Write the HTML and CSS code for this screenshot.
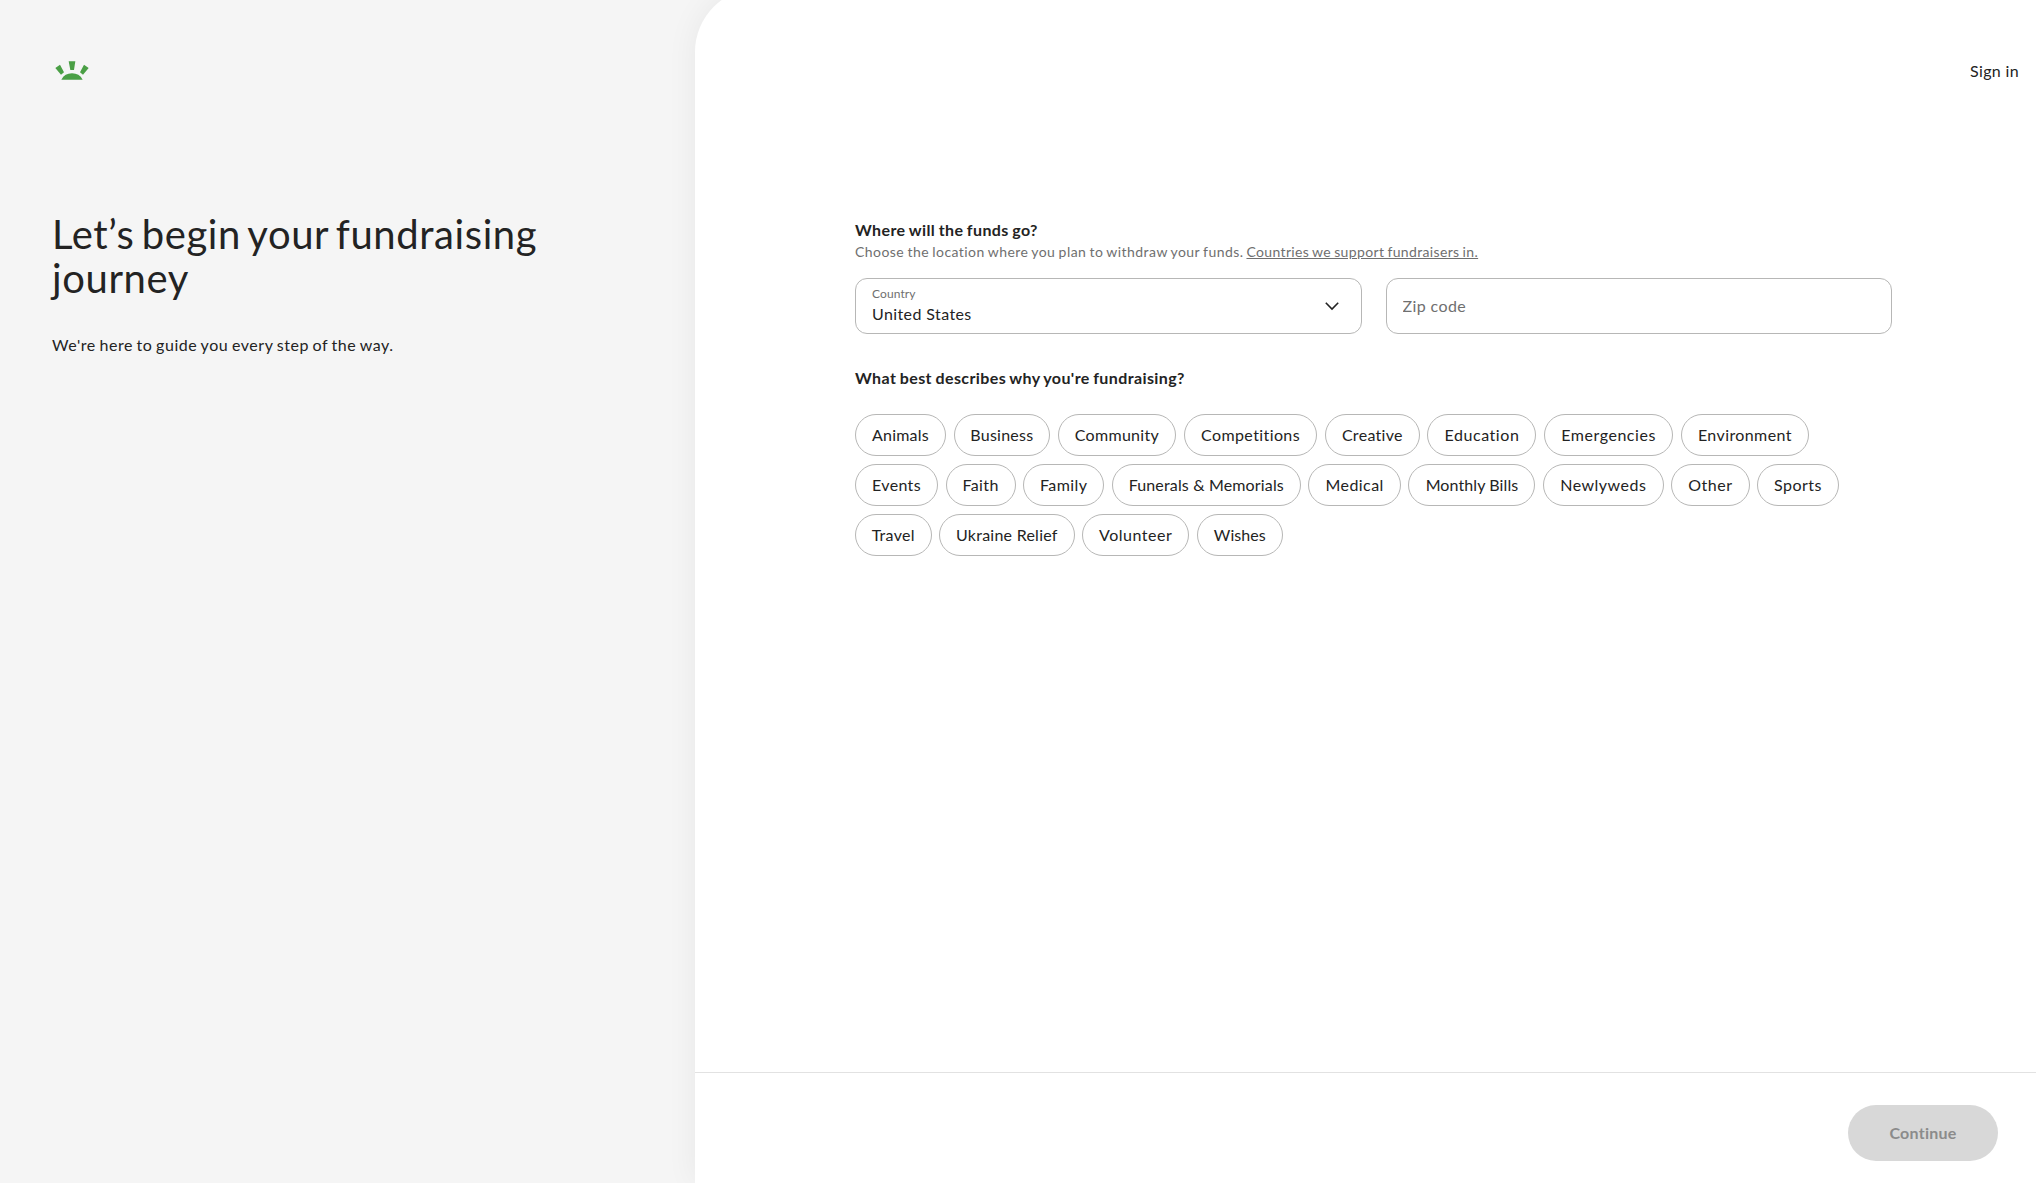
FILE: index.html
```html
<!DOCTYPE html>
<html lang="en">
  <head>
    <meta charset="UTF-8" />
    <meta name="viewport" content="width=device-width, initial-scale=1.0" />
    <title>Start a fundraiser</title>
    <link rel="stylesheet" href="styles.css">
  </head>
  <body>
    <aside class="intro">
      <a class="logo" href="#" aria-label="Home">
        <svg width="34" height="19" viewBox="0 0 102 57">
          <path d="M41 1h20l-4 26H46zM1 21l14-10 12 23-9 7zM101 21L87 11 75 34l9 7zM19 56q10-19 32-19t32 19z" />
        </svg>
      </a>
      <h1>Let’s begin your fundraising journey</h1>
      <p>We're here to guide you every step of the way.</p>
    </aside>

    <main class="panel">
      <header>
        <a class="sign-in" href="#">Sign in</a>
      </header>

      <form class="details">
        <h2>Where will the funds go?</h2>
        <p class="hint">
          <span>Choose the location where you plan to withdraw your funds.</span>
          <a href="#">Countries we support fundraisers in.</a>
        </p>

        <div class="fields">
          <div class="field country">
            <div>
              <span class="field-label">Country</span>
              <span class="field-value">United States</span>
            </div>
            <svg width="16" height="10" viewBox="0 0 16 10">
              <path d="M1.8 1.8L8 8l6.2-6.2" />
            </svg>
          </div>
          <input class="field" type="text" placeholder="Zip code" />
        </div>

        <h2>What best describes why you're fundraising?</h2>
        <div class="chips">
          <button type="button" class="chip animals">Animals</button>
          <button type="button" class="chip business">Business</button>
          <button type="button" class="chip community">Community</button>
          <button type="button" class="chip competitions">Competitions</button>
          <button type="button" class="chip creative">Creative</button>
          <button type="button" class="chip education">Education</button>
          <button type="button" class="chip emergencies">Emergencies</button>
          <button type="button" class="chip environment">Environment</button>
          <button type="button" class="chip events">Events</button>
          <button type="button" class="chip faith">Faith</button>
          <button type="button" class="chip family">Family</button>
          <button type="button" class="chip funerals">Funerals &amp; Memorials</button>
          <button type="button" class="chip medical">Medical</button>
          <button type="button" class="chip bills">Monthly Bills</button>
          <button type="button" class="chip newlyweds">Newlyweds</button>
          <button type="button" class="chip other">Other</button>
          <button type="button" class="chip sports">Sports</button>
          <button type="button" class="chip travel">Travel</button>
          <button type="button" class="chip ukraine">Ukraine Relief</button>
          <button type="button" class="chip volunteer">Volunteer</button>
          <button type="button" class="chip wishes">Wishes</button>
        </div>
      </form>

      <footer>
        <button class="continue-btn" disabled>Continue</button>
      </footer>
    </main>
  </body>
</html>
```
FILE: styles.css
```css
* {
  box-sizing: border-box;
}

body {
  display: flex;
  height: 100vh;
  margin: 0;
  overflow: hidden;
  background-color: #f5f5f5;
  color: #232323;
  font-family: Lato, "Liberation Sans", sans-serif;
  font-size: 16px;
  letter-spacing: 0.3px;
}

a {
  color: inherit;
}

button,
input {
  font: inherit;
}

/* Left side */
.intro {
  width: 695px;
  flex-shrink: 0;
  padding: 61px 100px 0 52px;
}

.logo {
  display: block;
  height: 19px;
  margin-left: 3px;
}

.logo svg {
  display: block;
  fill: #4a9f45;
}

h1 {
  margin: 132px 0 0;
  font-size: 40px;
  font-weight: 400;
  line-height: 44px;
  letter-spacing: 0.6px;
  word-spacing: -3.5px;
}

.intro p {
  margin: 33px 0 0;
  line-height: 24px;
  letter-spacing: 0.55px;
  word-spacing: -1px;
}

/* Right side */
.panel {
  display: flex;
  flex: 1;
  flex-direction: column;
  height: calc(100vh + 12px);
  margin-top: -12px;
  padding-top: 12px;
  border-top-left-radius: 64px;
  background-color: white;
  box-shadow: 0 0 32px rgba(0, 0, 0, 0.06);
}

header {
  display: flex;
  justify-content: flex-end;
  padding: 59px 17px 0 0;
}

.sign-in {
  line-height: 24px;
  letter-spacing: 0.35px;
  text-decoration: none;
}

.details {
  flex: 1;
  width: 1037px;
  margin: 135px 0 0 160px;
}

h2 {
  margin: 0;
  font-size: 16px;
  font-weight: 700;
  line-height: 24px;
  letter-spacing: 0.4px;
  word-spacing: -0.8px;
}

.hint {
  display: flex;
  gap: 3px;
  margin: 0 0 16px;
  color: #6f6f6f;
  font-size: 14px;
  line-height: 20px;
  letter-spacing: 0.45px;
  word-spacing: -0.8px;
}

.hint a {
  letter-spacing: 0.35px;
}

.fields {
  display: grid;
  grid-template-columns: 1fr 1fr;
  gap: 24px;
  margin-bottom: 32px;
}

.field {
  display: flex;
  align-items: center;
  justify-content: space-between;
  width: 100%;
  height: 56px;
  padding: 0 16px 2px;
  border: 1px solid #b7b7b6;
  border-radius: 12px;
  background-color: white;
  letter-spacing: 0.4px;
}

.field::placeholder {
  color: #6f6f6f;
  opacity: 1;
}

.country {
  padding: 0 21px 0 16px;
}

.country svg {
  fill: none;
  stroke: #232323;
  stroke-width: 1.6;
}

.field-label,
.field-value {
  display: block;
}

.field-label {
  color: #6f6f6f;
  font-size: 12px;
  line-height: 16px;
  letter-spacing: 0.1px;
}

.field-value {
  padding-bottom: 2px;
  line-height: 23px;
}

.chips {
  display: flex;
  flex-wrap: wrap;
  gap: 8px 7.6px;
  margin-top: 24px;
}

.chip {
  height: 42px;
  padding: 0 0 2px;
  border: 1px solid #b7b7b6;
  border-radius: 21px;
  background-color: white;
  color: #232323;
  white-space: nowrap;
}

.animals { width: 91px; letter-spacing: 0.2px; }
.business { width: 96.5px; letter-spacing: 0.25px; }
.community { width: 118.5px; letter-spacing: 0.3px; }
.competitions { width: 133.5px; letter-spacing: 0.4px; }
.creative { width: 95px; letter-spacing: 0.3px; }
.education { width: 109px; letter-spacing: 0.55px; }
.emergencies { width: 129px; letter-spacing: 0.55px; }
.environment { width: 128.5px; letter-spacing: 0.4px; }
.events { width: 83px; letter-spacing: 0.35px; }
.faith { width: 70px; letter-spacing: 0.4px; }
.family { width: 81px; letter-spacing: 0.4px; }
.funerals { width: 189px; letter-spacing: 0.15px; }
.medical { width: 92.5px; letter-spacing: 0.45px; }
.bills { width: 127px; letter-spacing: 0.1px; }
.newlyweds { width: 120.5px; letter-spacing: 0.5px; }
.other { width: 78.5px; letter-spacing: 0.55px; }
.sports { width: 81.5px; letter-spacing: 0.5px; }
.travel { width: 76.5px; letter-spacing: 0.3px; }
.ukraine { width: 135.5px; letter-spacing: 0.25px; }
.volunteer { width: 107px; letter-spacing: 0.5px; }
.wishes { width: 86px; letter-spacing: 0.05px; }

footer {
  display: flex;
  justify-content: flex-end;
  height: 111px;
  padding: 32px 38px 0 0;
  border-top: 1px solid #e2e2e2;
}

.continue-btn {
  width: 150px;
  height: 56px;
  padding-bottom: 3px;
  border: none;
  border-radius: 28px;
  background-color: #d8d8d8;
  color: #8b8b8b;
  font-weight: 700;
  letter-spacing: 0.25px;
}
```
